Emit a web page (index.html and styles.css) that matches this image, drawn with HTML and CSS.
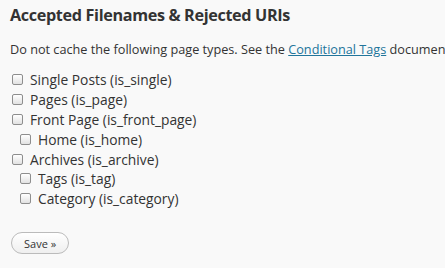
FILE: index.html
```
<!DOCTYPE html>
<html>
<head>
<meta charset="utf-8">
<link rel="stylesheet" href="styles.css">
</head>
<body>
<div class="wrap">
  <h3 class="title">Accepted Filenames &amp; Rejected URIs</h3>
  <p class="intro">Do not cache the following page types. See the <a href="#" class="link">Conditional Tags</a> documentation for a complete discussion on each type.</p>
  <ul class="list">
    <li class="item"><label class="row"><input type="checkbox" class="cb"><span>Single Posts (is_single)</span></label></li>
    <li class="item"><label class="row"><input type="checkbox" class="cb"><span>Pages (is_page)</span></label></li>
    <li class="item"><label class="row"><input type="checkbox" class="cb"><span>Front Page (is_front_page)</span></label></li>
    <li class="item sub"><label class="row"><input type="checkbox" class="cb"><span>Home (is_home)</span></label></li>
    <li class="item"><label class="row"><input type="checkbox" class="cb"><span>Archives (is_archive)</span></label></li>
    <li class="item sub"><label class="row"><input type="checkbox" class="cb"><span>Tags (is_tag)</span></label></li>
    <li class="item sub"><label class="row"><input type="checkbox" class="cb"><span>Category (is_category)</span></label></li>
  </ul>
  <div class="actions"><button class="btn">Save &raquo;</button></div>
</div>
</body>
</html>
```
FILE: styles.css
```
html, body {
  margin: 0;
  padding: 0;
  background: #f9f9f9;
  overflow: hidden;
}
body {
  width: 445px;
  height: 268px;
  font-family: "Open Sans", "DejaVu Sans", sans-serif;
  color: #333;
}
.wrap {
  padding: 4px 0 0 10px;
  width: 435px;
  overflow: hidden;
  white-space: nowrap;
}
.title {
  margin: 0;
  font-size: 16.2px;
  letter-spacing: -0.35px;
  font-weight: bold;
  line-height: 22px;
  color: #333;
}
.intro {
  margin: 15px 0 13px;
  font-size: 12.7px;
  line-height: 16px;
}
.link {
  color: #21759b;
  text-decoration: underline;
}
.list {
  list-style: none;
  margin: 0;
  padding: 0;
}
.item {
  height: 19.8px;
  display: flex;
  align-items: center;
}
.item.sub {
  padding-left: 8px;
}
.row {
  display: flex;
  align-items: center;
  gap: 7px;
  font-size: 13.8px;
}
.cb {
  appearance: none;
  -webkit-appearance: none;
  margin: 0 0 0 2px;
  width: 11px;
  height: 11px;
  border: 1px solid #8e8e8e;
  border-radius: 2px;
  background: linear-gradient(#ffffff, #e2e2e2);
  box-sizing: border-box;
}
.actions {
  margin-top: 22px;
}
.btn {
  font-family: inherit;
  font-size: 11px;
  color: #333;
  height: 22px;
  padding: 0 12px;
  border: 1px solid #bbb;
  border-radius: 11px;
  background: linear-gradient(#ffffff, #efefef);
  margin-left: 1px;
}
```
